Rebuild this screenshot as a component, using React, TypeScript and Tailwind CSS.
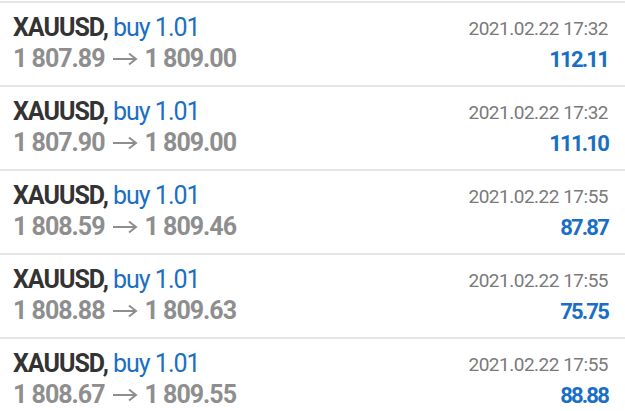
const DEALS = [
  { from: "1 807.89", to: "1 809.00", time: "2021.02.22 17:32", profit: "112.11" },
  { from: "1 807.90", to: "1 809.00", time: "2021.02.22 17:32", profit: "111.10" },
  { from: "1 808.59", to: "1 809.46", time: "2021.02.22 17:55", profit: "87.87" },
  { from: "1 808.88", to: "1 809.63", time: "2021.02.22 17:55", profit: "75.75" },
  { from: "1 808.67", to: "1 809.55", time: "2021.02.22 17:55", profit: "88.88" }
];

function Arrow() {
  return (
    <svg width="26" height="14" viewBox="0 0 26 14" className="mx-[7px] mt-[1px] inline-block" fill="none">
      <path d="M1 7H24M17 1.5L24 7L17 12.5" stroke="#8e8e8e" strokeWidth="2" />
    </svg>
  );
}

function DealRow({ deal }: { deal: (typeof DEALS)[number] }) {
  return (
    <div className="flex h-[84px] shrink-0 justify-between border-t-2 border-[#e6e6e6] pl-[13px] pr-[17px]">
      <div className="flex flex-col pt-[9px]">
        <div className="h-[31px] text-[25px] leading-[31px] tracking-[-1px]">
          <span className="font-bold text-[#333333]">XAUUSD,</span>
          <span className="text-[#1a6fc4]"> buy 1.01</span>
        </div>
        <div className="flex h-[31px] items-center text-[25px] font-bold leading-[31px] tracking-[-1px] text-[#8e8e8e]">
          <span>{deal.from}</span>
          <Arrow />
          <span>{deal.to}</span>
        </div>
      </div>
      <div className="flex flex-col items-end pt-[13px]">
        <div className="text-[19px] leading-[25px] tracking-[-0.5px] text-[#7a7a7a]">{deal.time}</div>
        <div className="mt-[5px] text-[22px] font-bold leading-[28px] tracking-[-1.8px] text-[#1a6fc4]">
          {deal.profit}
        </div>
      </div>
    </div>
  );
}

export default function App() {
  return (
    <div className="flex h-[411px] w-[625px] flex-col overflow-hidden bg-white pt-px font-['Roboto',sans-serif]">
      {DEALS.map((deal) => (
        <DealRow key={deal.time + deal.profit} deal={deal} />
      ))}
    </div>
  );
}
